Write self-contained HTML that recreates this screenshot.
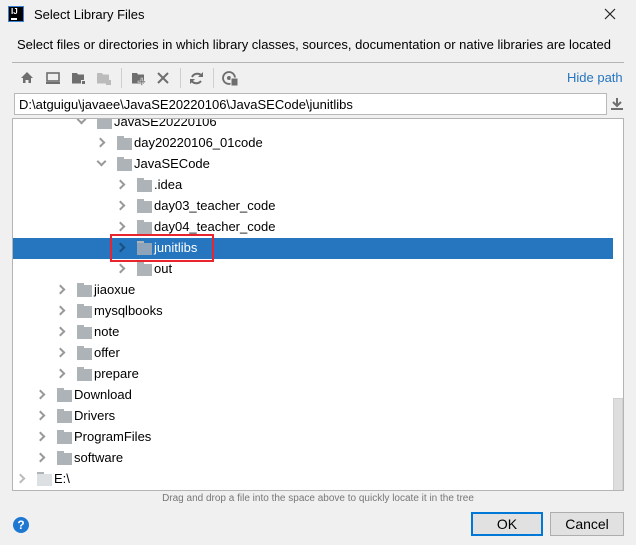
<!DOCTYPE html>
<html><head><meta charset="utf-8"><style>
*{margin:0;padding:0;box-sizing:border-box}
body{width:636px;height:545px;background:#f0f0f0;font-family:"Liberation Sans","Noto Sans CJK SC",sans-serif;font-size:13px;color:#000;position:relative;overflow:hidden}
.a{position:absolute}
.row{position:absolute;left:0;width:600px;height:21px}
.row .t{position:absolute;top:2px;font-size:13px;white-space:nowrap}
.fold{position:absolute;top:5px;width:15px;height:12px;background:#aeb3b8}
.fold:before{content:"";position:absolute;left:0;top:-2px;width:7px;height:2px;background:#aeb3b8}
.arr{position:absolute;top:4px;width:7px;height:7px;border-right:2px solid #999;border-bottom:2px solid #999}
.r{transform:rotate(-45deg);margin-top:2px}
.d{transform:rotate(45deg)}
.sel{background:#2675bf;color:#fff}
.btn{position:absolute;height:24px;border:1px solid #adadad;background:#e1e1e1;text-align:center;line-height:22px;font-size:14px}
</style></head><body>
<div class="a" style="left:8px;top:6px;width:16px;height:16px;background:#000;border:1px solid #3a7fd5;color:#fff;font-size:8px;font-weight:bold;line-height:9px;padding-left:2px">IJ<div style="width:6px;height:1.5px;background:#fff;margin-top:2px"></div></div>
<div class="a" style="left:34px;top:7px;font-size:13px">Select Library Files</div>
<svg class="a" style="left:604px;top:8px" width="12" height="12"><path d="M1 1L11 11M11 1L1 11" stroke="#222" stroke-width="1.2"/></svg>
<div class="a" style="left:17px;top:37px;font-size:13px">Select files or directories in which library classes, sources, documentation or native libraries are located</div>
<div class="a" style="left:12px;top:62px;width:612px;height:1px;background:#b4b4b4"></div>
<svg class="a" style="left:12px;top:66px" width="240" height="24" viewBox="0 0 240 24">
<g fill="#6e6e6e">
<path d="M9 12 L15 6 L21 12 L19 12 L19 17 L16.5 17 L16.5 14 L13.5 14 L13.5 17 L11 17 L11 12Z"/>
<rect x="35" y="7" width="12" height="8" fill="none" stroke="#6e6e6e" stroke-width="1.6"/><rect x="34" y="16" width="14" height="2"/>
<path d="M60 7h5l1 1.5h6v9h-12z"/><rect x="69" y="14" width="5" height="5" fill="#f0f0f0"/><rect x="70" y="15" width="3" height="3"/>
<g opacity=".4"><path d="M85 7h5l1 1.5h6v9h-12z"/><rect x="94" y="14" width="5" height="5"/></g>
<path d="M120 7h5l1 1.5h6v9h-12z"/><path d="M129 12h1.5v3h3v1.5h-3v3h-1.5v-3h-3v-1.5h3z" stroke="#f0f0f0" stroke-width="0.6"/>
<path d="M146 7l10 10M156 7l-10 10" stroke="#6e6e6e" stroke-width="2"/>
<path d="M190 10a6 6 0 0 0-10 1M179 14a6 6 0 0 0 10 1" fill="none" stroke="#6e6e6e" stroke-width="2"/><path d="M191 6v5h-5z M178 18v-5h5z"/>
<circle cx="217" cy="12" r="6" fill="none" stroke="#6e6e6e" stroke-width="1.8"/><circle cx="217" cy="12" r="2"/><rect x="219" y="12" width="7" height="8" fill="#6e6e6e" stroke="#f0f0f0"/>
</g>
<g fill="#cfcfcf"><rect x="109" y="2" width="1" height="20"/><rect x="168" y="2" width="1" height="20"/><rect x="201" y="2" width="1" height="20"/></g>
</svg>
<div class="a" style="left:567px;top:70px;color:#2675bf;font-size:13px">Hide path</div>
<div class="a" style="left:14px;top:93px;width:593px;height:22px;background:#fff;border:1px solid #b9b9b9;padding:3px 0 0 4px;font-size:13px">D:\atguigu\javaee\JavaSE20220106\JavaSECode\junitlibs</div>
<svg class="a" style="left:609px;top:96px" width="16" height="16"><path d="M8 2v8M4 6l4 4 4-4" stroke="#6e6e6e" stroke-width="2" fill="none"/><rect x="2" y="12" width="12" height="2" fill="#6e6e6e"/></svg>
<div class="a" style="left:12px;top:118px;width:612px;height:373px;background:#fff;border:1px solid #b4b4b4;overflow:hidden">
<div style="position:absolute;left:0;top:-7px;width:612px">
<div class="row" style="top:0"><div class="arr d" style="left:65px"></div><div class="fold" style="left:84px"></div><div class="t" style="left:101px">JavaSE20220106</div></div>
<div class="row" style="top:21px"><div class="arr r" style="left:84px"></div><div class="fold" style="left:104px"></div><div class="t" style="left:121px">day20220106_01code</div></div>
<div class="row" style="top:42px"><div class="arr d" style="left:85px"></div><div class="fold" style="left:104px"></div><div class="t" style="left:121px">JavaSECode</div></div>
<div class="row" style="top:63px"><div class="arr r" style="left:104px"></div><div class="fold" style="left:124px"></div><div class="t" style="left:141px">.idea</div></div>
<div class="row" style="top:84px"><div class="arr r" style="left:104px"></div><div class="fold" style="left:124px"></div><div class="t" style="left:141px">day03_teacher_code</div></div>
<div class="row" style="top:105px"><div class="arr r" style="left:104px"></div><div class="fold" style="left:124px"></div><div class="t" style="left:141px">day04_teacher_code</div></div>
<div class="row sel" style="top:126px;width:600px"><div class="arr r" style="left:104px;border-color:#1b4f80"></div><div class="fold" style="left:124px;background:#8fa4b8"></div><div class="t" style="left:141px">junitlibs</div></div>
<div class="row" style="top:147px"><div class="arr r" style="left:104px"></div><div class="fold" style="left:124px"></div><div class="t" style="left:141px">out</div></div>
<div class="row" style="top:168px"><div class="arr r" style="left:44px"></div><div class="fold" style="left:64px"></div><div class="t" style="left:81px">jiaoxue</div></div>
<div class="row" style="top:189px"><div class="arr r" style="left:44px"></div><div class="fold" style="left:64px"></div><div class="t" style="left:81px">mysqlbooks</div></div>
<div class="row" style="top:210px"><div class="arr r" style="left:44px"></div><div class="fold" style="left:64px"></div><div class="t" style="left:81px">note</div></div>
<div class="row" style="top:231px"><div class="arr r" style="left:44px"></div><div class="fold" style="left:64px"></div><div class="t" style="left:81px">offer</div></div>
<div class="row" style="top:252px"><div class="arr r" style="left:44px"></div><div class="fold" style="left:64px"></div><div class="t" style="left:81px">prepare</div></div>
<div class="row" style="top:273px"><div class="arr r" style="left:24px"></div><div class="fold" style="left:44px"></div><div class="t" style="left:61px">Download</div></div>
<div class="row" style="top:294px"><div class="arr r" style="left:24px"></div><div class="fold" style="left:44px"></div><div class="t" style="left:61px">Drivers</div></div>
<div class="row" style="top:315px"><div class="arr r" style="left:24px"></div><div class="fold" style="left:44px"></div><div class="t" style="left:61px">ProgramFiles</div></div>
<div class="row" style="top:336px"><div class="arr r" style="left:24px"></div><div class="fold" style="left:44px"></div><div class="t" style="left:61px">software</div></div>
<div class="row" style="top:357px"><div class="arr r" style="left:4px;border-color:#bbb"></div><div class="fold" style="left:24px;background:#dde0e3"></div><div class="t" style="left:41px">E:\</div></div>
</div>
<div style="position:absolute;left:97px;top:115px;width:104px;height:28px;border:2px solid #e8242e"></div>
<div style="position:absolute;left:600px;top:279px;width:10px;height:93px;background:#dedede;border:1px solid #d0d0d0"></div>
</div>
<div class="a" style="left:0;width:636px;top:493px;text-align:center;font-size:10px;color:#777">Drag and drop a file into the space above to quickly locate it in the tree</div>
<div class="a" style="left:13px;top:517px;width:16px;height:16px;border-radius:50%;background:#1e78d2;color:#fff;font-size:12px;text-align:center;line-height:16px;font-weight:bold">?</div>
<div class="btn" style="left:471px;top:512px;width:72px;border:2px solid #0078d7;line-height:20px">OK</div>
<div class="btn" style="left:550px;top:512px;width:74px">Cancel</div>
</body></html>
